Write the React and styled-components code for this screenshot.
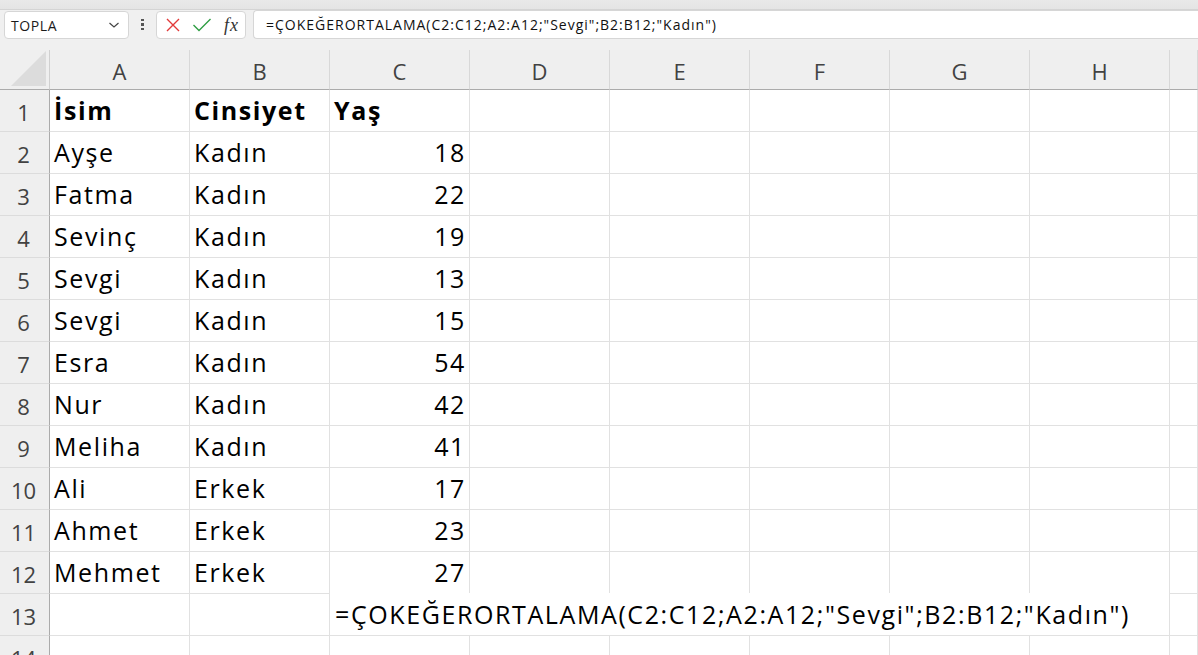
import React from "react";
import styled, { createGlobalStyle } from "styled-components";

const GlobalStyle = createGlobalStyle`
  html, body { margin: 0; padding: 0; background: #ffffff; }
  body { font-family: "Open Sans", "Liberation Sans", sans-serif; overflow: hidden; }
  * { box-sizing: border-box; }
`;

const FORMULA = '=ÇOKEĞERORTALAMA(C2:C12;A2:A12;"Sevgi";B2:B12;"Kadın")';

const rows = [
  ["Ayşe", "Kadın", 18],
  ["Fatma", "Kadın", 22],
  ["Sevinç", "Kadın", 19],
  ["Sevgi", "Kadın", 13],
  ["Sevgi", "Kadın", 15],
  ["Esra", "Kadın", 54],
  ["Nur", "Kadın", 42],
  ["Meliha", "Kadın", 41],
  ["Ali", "Erkek", 17],
  ["Ahmet", "Erkek", 23],
  ["Mehmet", "Erkek", 27],
];

const cols = ["A", "B", "C", "D", "E", "F", "G", "H", ""];

function App() {
  return (
    <Page>
      <GlobalStyle />
      <TopStrip />
      <FormulaBar>
        <NameBox>
          <span>TOPLA</span>
          <svg width="12" height="8" viewBox="0 0 12 8">
            <path d="M1.5 2 L6 6 L10.5 2" fill="none" stroke="#444" strokeWidth="1.2" />
          </svg>
        </NameBox>
        <Dots>
          <i /><i /><i />
        </Dots>
        <ButtonBox>
          <svg width="16" height="16" viewBox="0 0 16 16">
            <path d="M2 2 L14 14 M14 2 L2 14" stroke="#e23a3a" strokeWidth="1.4" />
          </svg>
          <svg width="20" height="16" viewBox="0 0 20 16">
            <path d="M1.5 8 L7 13.5 L18.5 2" fill="none" stroke="#2f9e44" strokeWidth="1.4" />
          </svg>
          <Fx>
            <i>f</i><i>x</i>
          </Fx>
        </ButtonBox>
        <FormulaInput>{FORMULA}</FormulaInput>
      </FormulaBar>

      <Sheet>
        <Corner>
          <svg width="35" height="35" viewBox="0 0 35 35">
            <polygon points="35,0 35,35 0,35" fill="#dcdcdc" />
          </svg>
        </Corner>
        {cols.map((c, i) => (
          <ColHead key={i}>{c}</ColHead>
        ))}

        <RowHead>1</RowHead>
        <Cell bold>İsim</Cell>
        <Cell bold>Cinsiyet</Cell>
        <Cell bold>Yaş</Cell>
        {[0, 1, 2, 3, 4, 5].map((k) => (
          <Cell key={k} />
        ))}

        {rows.map((r, i) => (
          <React.Fragment key={i}>
            <RowHead>{i + 2}</RowHead>
            <Cell>{r[0]}</Cell>
            <Cell>{r[1]}</Cell>
            <Cell numeric>{r[2]}</Cell>
            {[0, 1, 2, 3, 4, 5].map((k) => (
              <Cell key={k} />
            ))}
          </React.Fragment>
        ))}

        <RowHead>13</RowHead>
        <Cell />
        <Cell />
        <Editor>{FORMULA}</Editor>
        <Cell />

        <RowHead>14</RowHead>
        {[0, 1, 2, 3, 4, 5, 6, 7, 8].map((k) => (
          <Cell key={k} />
        ))}
      </Sheet>
    </Page>
  );
}

const Page = styled.div`
  width: 1198px;
  height: 655px;
  overflow: hidden;
  background: #f0f0f0;
`;

const TopStrip = styled.div`
  height: 10px;
  background: linear-gradient(#e9e9e9, #e4e4e4);
  border-bottom: 1px solid #d4d4d4;
`;

const FormulaBar = styled.div`
  display: flex;
  align-items: stretch;
  height: 29px;
  padding-left: 4px;
  margin-bottom: 11px;
`;

const NameBox = styled.div`
  width: 125px;
  margin: 1px 0 0;
  background: #fff;
  border: 1px solid #d6d6d6;
  border-radius: 4px;
  display: flex;
  align-items: center;
  justify-content: space-between;
  padding: 0 8px 0 6px;
  font-family: "Open Sans", "Liberation Sans", sans-serif;
  font-size: 14px;
  letter-spacing: 0.6px;
  color: #1b1b1b;
`;

const Dots = styled.div`
  width: 27px;
  display: flex;
  flex-direction: column;
  align-items: center;
  justify-content: center;
  gap: 2px;
  i {
    width: 2.5px;
    height: 2.5px;
    background: #555;
    display: block;
  }
`;

const ButtonBox = styled.div`
  width: 90px;
  margin: 1px 0 0;
  background: #fff;
  border: 1px solid #d6d6d6;
  border-radius: 4px;
  display: flex;
  align-items: center;
  justify-content: space-between;
  padding: 0 7px 0 8px;
`;

const Fx = styled.span`
  font-family: "Liberation Serif", "DejaVu Serif", serif;
  font-size: 18px;
  color: #333;
  i {
    font-style: italic;
  }
  i:first-child {
    margin-right: 1px;
  }
`;

const FormulaInput = styled.div`
  flex: 1;
  margin-left: 7px;
  background: #fff;
  border: 1px solid #d6d6d6;
  border-right: none;
  border-radius: 4px 0 0 4px;
  display: flex;
  align-items: center;
  padding-left: 12px;
  font-family: "Open Sans", "Liberation Sans", sans-serif;
  font-size: 14px;
  letter-spacing: 1px;
  color: #111;
`;

const Sheet = styled.div`
  display: grid;
  grid-template-columns: 50px repeat(8, 140px) 1fr;
  grid-template-rows: 40px repeat(13, 42px) 42px;
  background: #fff;
`;

const Corner = styled.div`
  background: #efefef;
  border-right: 1px solid #d0d0d0;
  border-bottom: 1px solid #ababab;
  display: flex;
  align-items: flex-end;
  justify-content: flex-end;
  padding: 0 3px 3px 0;
`;

const ColHead = styled.div`
  background: #efefef;
  border-right: 1px solid #d8d8d8;
  border-bottom: 1px solid #ababab;
  display: flex;
  align-items: center;
  justify-content: center;
  padding-top: 2px;
  font-family: "Open Sans", "Noto Sans", sans-serif;
  font-size: 22px;
  color: #424242;
`;

const RowHead = styled.div`
  background: #efefef;
  border-right: 1px solid #ababab;
  border-bottom: 1px solid #dcdcdc;
  display: flex;
  align-items: center;
  justify-content: center;
  padding: 2px 2px 0 0;
  font-family: "Open Sans", "Noto Sans", sans-serif;
  font-size: 22px;
  color: #424242;
`;

const Cell = styled.div`
  border-right: 1px solid #e1e1e1;
  border-bottom: 1px solid #e1e1e1;
  display: flex;
  align-items: flex-end;
  justify-content: ${(p) => (p.numeric ? "flex-end" : "flex-start")};
  padding: 0 ${(p) => (p.numeric ? "3px" : "5px")} 4px 4px;
  font-family: "Open Sans", "Liberation Sans", sans-serif;
  font-size: 25px;
  letter-spacing: 1.6px;
  font-weight: ${(p) => (p.bold ? 700 : 400)};
  color: #000;
  white-space: nowrap;
`;

const Editor = styled.div`
  grid-column: span 6;
  margin-top: -1px;
  background: #fff;
  border-bottom: 1px solid #e1e1e1;
  border-right: 1px solid #e1e1e1;
  display: flex;
  align-items: flex-end;
  padding: 0 0 4px 5px;
  font-family: "Open Sans", "Liberation Sans", sans-serif;
  font-size: 25px;
  letter-spacing: 1.6px;
  color: #000;
  white-space: nowrap;
`;

export default App;
